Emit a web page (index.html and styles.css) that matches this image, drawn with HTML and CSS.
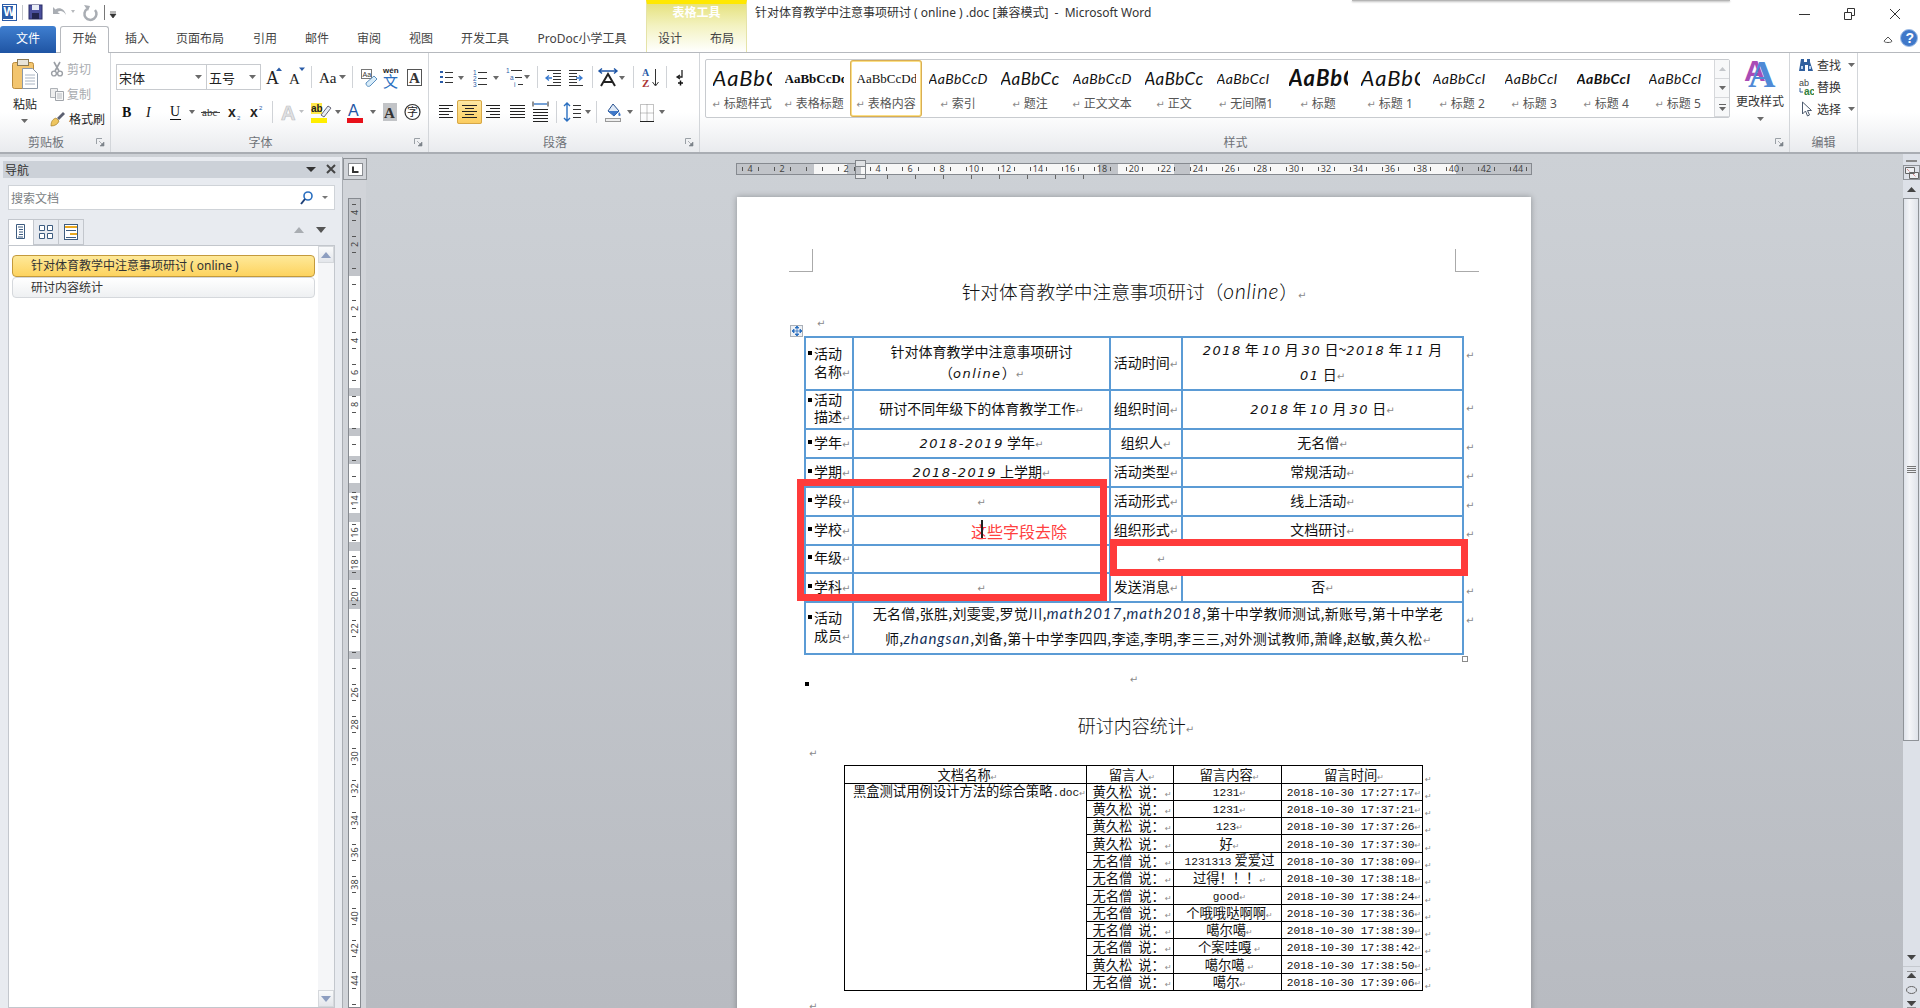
FILE: index.html
```html
<!DOCTYPE html>
<html>
<head>
    <title>针对体育教学中注意事项研讨 ( online ).doc - Microsoft Word</title>
    <link rel="stylesheet" href="styles.css">
</head>
<body>
<svg class="defs" width="0" height="0">
    <symbol id="dd" viewBox="0 0 7 4"><path d="M0 0h7L3.5 4z" fill="#6a6a6a"/></symbol>
    <symbol id="launch" viewBox="0 0 9 9"><path d="M.5 6V.5H6" fill="none" stroke="#9aa0a6"/><path d="M3 3l4 4M8 4v4H4z" fill="#7d838a" stroke="#7d838a" stroke-width=".6"/></symbol>
</svg>
<div class="app">
    <div class="topshadow"></div>
    <div class="tool-band"><span>表格工具</span></div>

    <div class="titlebar">
        <svg class="qat" width="120" height="26">
            <rect x="2.5" y="4.5" width="14" height="16" fill="#fff" stroke="#2b5ca8"/>
            <rect x="3" y="6" width="10" height="13" fill="#2b5ca8"/>
            <text x="3.5" y="16" class="ico-w">W</text>
            <path d="M22.500 5v15" stroke="#c4c7cb"/>
            <rect x="29" y="5" width="13" height="14" fill="#4a4f9c" stroke="#2b2f66"/>
            <rect x="32" y="5" width="7" height="5" fill="#e8ecf5"/>
            <rect x="32" y="13" width="7" height="6" fill="#23264f"/>
            <path d="M53 14V7l2.500 2.500C59 6.500 65 9 66 15c-2-4-6-5-8.500-3l2.500 2z" fill="#a9adb3"/>
            <path d="M71 10h4l-2 3z" fill="#b6b9bd"/>
            <path d="M87 9a6 6 0 1 0 8 1" fill="none" stroke="#a9adb3" stroke-width="2.500"/>
            <path d="M84 5l6 1-2 5z" fill="#a9adb3"/>
            <path d="M104.500 5v15" stroke="#777"/>
            <path d="M110 12h6M110 14h6l-3 4z" fill="#333" stroke="#333" stroke-width=".7"/>
        </svg>
        <div class="doc-title">针对体育教学中注意事项研讨 ( online ) .doc [兼容模式]&nbsp; - &nbsp;Microsoft Word</div>
        <svg class="winbtns" width="112" height="26">
            <path d="M0 14.500h11" stroke="#333"/>
            <path d="M45.500 12.500h7v7h-7zM48.500 12V8.500h7v7H53" fill="none" stroke="#333"/>
            <path d="M91 9l10 10M101 9L91 19" stroke="#333" fill="none"/>
        </svg>
    </div>

    <div class="tabrow">
        <div class="tabs">
            <div class="tab tab-file">文件</div>
            <div class="tab tab-on">开始</div>
            <div class="tab">插入</div>
            <div class="tab">页面布局</div>
            <div class="tab">引用</div>
            <div class="tab">邮件</div>
            <div class="tab">审阅</div>
            <div class="tab">视图</div>
            <div class="tab">开发工具</div>
            <div class="tab">ProDoc小学工具</div>
            <div class="tab">设计</div>
            <div class="tab">布局</div>
        </div>
        <svg class="helpbtns" width="40" height="26">
            <path d="M4 15l4-4 4 4c0 2-8 2-8 0z" fill="#fff" stroke="#555"/>
            <circle cx="29" cy="12" r="8.500" fill="#3f78c9" stroke="#9dbce6"/>
            <text x="25.500" y="17" class="ico-q">?</text>
        </svg>
    </div>

    <div class="ribbon">
        <!-- 剪贴板 -->
        <section class="group g-clip">
            <div class="clip-body">
                <div class="paste">
                    <svg width="28" height="32">
                        <rect x="1.500" y="4.500" width="21" height="26" rx="2" fill="#f3c56e" stroke="#b98b3e"/>
                        <rect x="6.500" y="1.500" width="11" height="6" fill="#e8e4d8" stroke="#8a7a55"/>
                        <path d="M11.500 10.500h10l5 5v15h-15z" fill="#fff" stroke="#8c99a8"/>
                        <path d="M14 17h10M14 20h10M14 23h10M14 26h10" stroke="#a9b4c2"/>
                    </svg>
                    <span class="paste-t">粘贴</span>
                    <svg class="dd" width="7" height="4"><use href="#dd"/></svg>
                </div>
                <div class="clip-list">
                    <div class="clip-item off">
                        <svg width="14" height="16"><path d="M4 1l5 9M10 1L5 10" stroke="#9b9fa5" stroke-width="1.600"/><circle cx="4" cy="12.500" r="2.400" fill="none" stroke="#9b9fa5" stroke-width="1.400"/><circle cx="10" cy="12.500" r="2.400" fill="none" stroke="#9b9fa5" stroke-width="1.400"/></svg>
                        <span>剪切</span>
                    </div>
                    <div class="clip-item off">
                        <svg width="14" height="16"><path d="M.500 2.500h7v9h-7z" fill="#eee" stroke="#aeb2b7"/><path d="M5.500 5.500h8v9h-8z" fill="#f7f7f7" stroke="#a0a4aa"/><path d="M7 8h5M7 10h5M7 12h5" stroke="#b7bbc0"/></svg>
                        <span>复制</span>
                    </div>
                    <div class="clip-item">
                        <svg width="16" height="16"><path d="M1 15c0-5 2-7 5-8l3 3c-1 3-4 5-8 5z" fill="#eec55f" stroke="#a5812c" stroke-width=".7"/><path d="M7 7l6-6 2 2-6 6z" fill="#5a5f70"/></svg>
                        <span>格式刷</span>
                    </div>
                </div>
            </div>
            <div class="g-label">剪贴板<svg class="launch" width="9" height="9"><use href="#launch"/></svg></div>
        </section>

        <!-- 字体 -->
        <section class="group g-font">
            <div class="g-body">
                <div class="tools row-a">
                    <div class="combo c-face">宋体<svg width="7" height="4"><use href="#dd"/></svg></div>
                    <div class="combo c-size">五号<svg width="7" height="4"><use href="#dd"/></svg></div>
                    <svg width="23" height="26"><text x="5" y="20" class="ico-a">A</text><path d="M15 7l3-3.500L21 7z" fill="#2a5ca8"/></svg>
                    <svg width="23" height="26"><text x="5" y="20" class="ico-a2">A</text><path d="M15 3.500h6L18 7z" fill="#2a5ca8"/></svg>
                    <span class="sep"></span>
                    <svg width="33" height="26"><text x="4" y="19" class="ico-aa">Aa</text><path d="M24 11h7l-3.500 4z" fill="#6a6a6a"/></svg>
                    <span class="sep"></span>
                    <svg width="23" height="26"><rect x="5.500" y="5.500" width="10" height="9" fill="#fff" stroke="#777"/><text x="6.500" y="13" class="ico-tiny">Aa</text><path d="M10 19l8-7 3 3-7 7c-2 1-4 0-4-3z" fill="#d8ecf9" stroke="#5b8fc0"/></svg>
                    <svg width="23" height="26"><text x="4" y="9" class="ico-wen">wén</text><text x="4" y="23" class="ico-wenzi">文</text></svg>
                    <svg width="23" height="26"><rect x="5.500" y="5.500" width="14" height="16" fill="#fff" stroke="#555"/><text x="7" y="19" class="ico-serif">A</text></svg>
                </div>
                <div class="tools row-b">
                    <svg width="23" height="24"><text x="6" y="17" class="ico-b">B</text></svg>
                    <svg width="22" height="24"><text x="7" y="17" class="ico-i">I</text></svg>
                    <svg width="36" height="24"><text x="9" y="16" class="ico-u">U</text><path d="M9 19.500h11" stroke="#111"/><path d="M28 10h6l-3 4z" fill="#6a6a6a"/></svg>
                    <svg width="27" height="24"><text x="5" y="16" class="ico-abc">abc</text><path d="M4 12.500h19" stroke="#444"/></svg>
                    <svg width="22" height="24"><text x="4" y="17" class="ico-x">x</text><text x="13" y="20" class="ico-sub">2</text></svg>
                    <svg width="22" height="24"><text x="4" y="17" class="ico-x">x</text><text x="13" y="10" class="ico-sub">2</text></svg>
                    <span class="sep"></span>
                    <svg width="31" height="24"><text x="5" y="20" class="ico-ghost">A</text><path d="M23 10h5l-2.500 3z" fill="#bdbfc2"/></svg>
                    <svg width="35" height="24"><rect x="4" y="3" width="11" height="11" fill="#ffe94a"/><text x="4" y="12" class="ico-ab">ab</text><path d="M14 15l7-9 3 2-7 9z" fill="#e9eef5" stroke="#667"/><rect x="4" y="18" width="16" height="5" fill="#ffee00"/><path d="M28 10h6l-3 4z" fill="#6a6a6a"/></svg>
                    <svg width="36" height="24"><text x="6" y="16" class="ico-ablue">A</text><rect x="5" y="18" width="16" height="5" fill="#e8101a"/><path d="M28 10h6l-3 4z" fill="#6a6a6a"/></svg>
                    <svg width="23" height="24"><rect x="5" y="3" width="14" height="18" fill="#c2c4c7"/><text x="6" y="18" class="ico-serif">A</text></svg>
                    <svg width="23" height="24"><circle cx="11.500" cy="12" r="7.500" fill="#fff" stroke="#333" stroke-width="1.200"/><text x="6" y="16" class="ico-zi">字</text></svg>
                </div>
            </div>
            <div class="g-label">字体<svg class="launch" width="9" height="9"><use href="#launch"/></svg></div>
        </section>

        <!-- 段落 -->
        <section class="group g-para">
            <div class="g-body">
                <div class="tools row-a">
                    <svg width="33" height="26"><path d="M5 8h3M5 13h3M5 18h3" stroke="#2a5ca8" stroke-width="2"/><path d="M10 8.500h8M10 13.500h8M10 18.500h8" stroke="#333"/><path d="M23 12h6l-3 4z" fill="#6a6a6a"/></svg>
                    <svg width="34" height="26"><text x="5" y="11" class="ico-n">1</text><text x="5" y="17" class="ico-n">2</text><text x="5" y="23" class="ico-n">3</text><path d="M10 8.500h9M10 14.500h9M10 20.500h9" stroke="#333"/><path d="M25 12h6l-3 4z" fill="#6a6a6a"/></svg>
                    <svg width="31" height="26"><text x="4" y="9" class="ico-n">1</text><text x="8" y="16" class="ico-n">a</text><text x="12" y="23" class="ico-n">i</text><path d="M9 6.500h11M13 13.500h7M16 20.500h5" stroke="#333"/><path d="M22 11h6l-3 4z" fill="#6a6a6a"/></svg>
                    <span class="sep"></span>
                    <svg width="25" height="26"><path d="M6 6.500h14M12 9.500h8M12 12.500h8M12 15.500h8M12 18.500h8M6 21.500h14" stroke="#333"/><path d="M11 14H6M8 11.500L5 14l3 2.500" stroke="#3a7bd0" fill="none" stroke-width="1.300"/></svg>
                    <svg width="22" height="26"><path d="M3 6.500h14M3 9.500h8M3 12.500h8M3 15.500h8M3 18.500h8M3 21.500h14" stroke="#333"/><path d="M11 14h6M14 11.500l3 2.500-3 2.500" stroke="#3a7bd0" fill="none" stroke-width="1.300" transform="translate(-1)"/></svg>
                    <span class="sep"></span>
                    <svg width="31" height="26"><path d="M5 22L12 10l7 12M8 18h8" fill="none" stroke="#222" stroke-width="2"/><path d="M3 7h18M6 4.500L3 7l3 2.500M18 4.500L21 7l-3 2.500" fill="none" stroke="#1f56a6" stroke-width="1.400"/><path d="M23 12h6l-3 4z" fill="#6a6a6a"/></svg>
                    <span class="sep s12"></span>
                    <svg width="23" height="26"><text x="3" y="12" class="ico-az">A</text><text x="3" y="23" class="ico-zr">Z</text><path d="M16.500 5v16M13.500 18l3 4 3-4" stroke="#333" fill="none"/></svg>
                    <span class="sep"></span>
                    <svg width="24" height="26"><path d="M12 6v7H8M10 11l-3 2 3 2" fill="none" stroke="#222" stroke-width="1.300"/><path d="M8 19h5M10.500 16.500v5" stroke="#111" stroke-width="1.500"/></svg>
                </div>
                <div class="tools row-b">
                    <svg width="22" height="24"><path d="M4 5.500h14M4 8.500h10M4 11.500h14M4 14.500h10M4 17.500h14" stroke="#222"/></svg>
                    <svg class="on" width="25" height="24"><path d="M5 5.500h15M8 8.500h9M5 11.500h15M8 14.500h9M5 17.500h15" stroke="#222"/></svg>
                    <svg width="24" height="24"><path d="M4 5.500h14M8 8.500h10M4 11.500h14M8 14.500h10M4 17.500h14" stroke="#222"/></svg>
                    <svg width="23" height="24"><path d="M4 5.500h15M4 8.500h15M4 11.500h15M4 14.500h15M4 17.500h15" stroke="#222"/></svg>
                    <svg width="23" height="24"><path d="M4 9.500h15M4 12.500h15M4 15.500h15M4 18.500h15M4 21.500h15M4 1.500v5M19 1.500v5" stroke="#222"/><path d="M5 4h13" stroke="#2a6fc0" stroke-width="1.300"/></svg>
                    <span class="sep"></span>
                    <svg width="32" height="24"><path d="M7 3v18M4 6l3-3 3 3M4 18l3 3 3-3" fill="none" stroke="#2a6fc0" stroke-width="1.400"/><path d="M13 5.500h8M13 9.500h8M13 13.500h8M13 17.500h8" stroke="#333"/><path d="M25 10h6l-3 4z" fill="#6a6a6a"/></svg>
                    <span class="sep"></span>
                    <svg width="35" height="24"><path d="M8 11l5-7 6 7-5 5z" fill="#dfe9f6" stroke="#27518f"/><path d="M8 11h11l-5 5z" fill="#3f78c9"/><path d="M19 12c2 2 2 4 .5 4s-1.500-2-.5-4z" fill="#3f78c9"/><rect x="5.500" y="18.500" width="15" height="3" fill="#eee" stroke="#999"/><path d="M27 10h6l-3 4z" fill="#6a6a6a"/></svg>
                    <svg width="33" height="24"><path d="M5.500 4.500h13v17h-13zM5.500 13h13M12 4.500v17" fill="none" stroke="#888" stroke-dasharray="1 1"/><path d="M5 21.500h14" stroke="#222"/><path d="M24 10h6l-3 4z" fill="#6a6a6a"/></svg>
                </div>
            </div>
            <div class="g-label">段落<svg class="launch" width="9" height="9"><use href="#launch"/></svg></div>
        </section>

        <!-- 样式 -->
        <section class="group g-style">
            <div class="style-top">
                <div class="gallery">
                    <div class="sty"><b class="hand big">AaBbC(</b><span><i class="pm">↵</i> 标题样式</span></div>
                    <div class="sty"><b class="ser bold">AaBbCcDd</b><span><i class="pm">↵</i> 表格标题</span></div>
                    <div class="sty sty-on"><b class="ser">AaBbCcDdE</b><span><i class="pm">↵</i> 表格内容</span></div>
                    <div class="sty"><b class="hand">AaBbCcD</b><span><i class="pm">↵</i> 索引</span></div>
                    <div class="sty"><b class="hand mid">AaBbCc</b><span><i class="pm">↵</i> 题注</span></div>
                    <div class="sty"><b class="hand">AaBbCcD</b><span><i class="pm">↵</i> 正文文本</span></div>
                    <div class="sty"><b class="hand mid">AaBbCc</b><span><i class="pm">↵</i> 正文</span></div>
                    <div class="sty"><b class="hand">AaBbCcI</b><span><i class="pm">↵</i> 无间隔1</span></div>
                    <div class="sty"><b class="hand big heavy">AaBbC</b><span><i class="pm">↵</i> 标题</span></div>
                    <div class="sty"><b class="hand big">AaBbC(</b><span><i class="pm">↵</i> 标题 1</span></div>
                    <div class="sty"><b class="hand">AaBbCcI</b><span><i class="pm">↵</i> 标题 2</span></div>
                    <div class="sty"><b class="hand">AaBbCcI</b><span><i class="pm">↵</i> 标题 3</span></div>
                    <div class="sty"><b class="hand heavy">AaBbCcI</b><span><i class="pm">↵</i> 标题 4</span></div>
                    <div class="sty"><b class="hand">AaBbCcI</b><span><i class="pm">↵</i> 标题 5</span></div>
                    <div class="sty-scroll">
                        <span><svg width="7" height="4"><path d="M0 4h7L3.500 0z" fill="#c3c6ca"/></svg></span>
                        <span><svg width="7" height="4"><use href="#dd"/></svg></span>
                        <span><svg width="7" height="7"><path d="M0 .5h7" stroke="#666"/><path d="M0 3h7L3.500 7z" fill="#666"/></svg></span>
                    </div>
                </div>
                <div class="change">
                    <svg width="32" height="30"><text x="0" y="22" class="ico-bigA1">A</text><text x="4" y="28" class="ico-bigA2">A</text></svg>
                    <span>更改样式</span>
                    <svg class="dd" width="7" height="4"><use href="#dd"/></svg>
                </div>
            </div>
            <div class="g-label">样式<svg class="launch" width="9" height="9"><use href="#launch"/></svg></div>
        </section>

        <!-- 编辑 -->
        <section class="group g-edit">
            <div class="edit-list">
                <div class="edit-item">
                    <svg width="16" height="16"><path d="M3 2h3v3h3V2h3v3l3 9h-5V8H7v6H1z" fill="#2f5f9e"/><path d="M3 9h2v3H3zM11 9h2v3h-2z" fill="#b9d3f0"/></svg>
                    <span>查找</span><svg width="7" height="4"><use href="#dd"/></svg>
                </div>
                <div class="edit-item">
                    <svg width="16" height="18"><text x="1" y="8" class="ico-rep">ab</text><text x="6" y="17" class="ico-rep2">ac</text><path d="M2 10v4h3" fill="none" stroke="#2f5f9e"/></svg>
                    <span>替换</span>
                </div>
                <div class="edit-item">
                    <svg width="16" height="16"><path d="M4.500 1v12l3-3 2 5 2-1-2-4.500h4z" fill="#fff" stroke="#4d5b6e"/></svg>
                    <span>选择</span><svg width="7" height="4"><use href="#dd"/></svg>
                </div>
            </div>
            <div class="g-label">编辑</div>
        </section>
    </div>

    <div class="main">
        <!-- 导航窗格 -->
        <aside class="nav">
            <div class="nav-head">
                <span>导航</span>
                <svg width="34" height="17"><path d="M2 6h10L7 11z" fill="#333"/><path d="M23 4l8 8M31 4l-8 8" stroke="#444" stroke-width="2"/></svg>
            </div>
            <div class="nav-search">
                <span>搜索文档</span>
                <svg width="34" height="16"><circle cx="10" cy="6" r="4" fill="#fff" stroke="#2a6fc0" stroke-width="1.600"/><path d="M7 9l-4 5" stroke="#1c3f78" stroke-width="2"/><path d="M24 6h6l-3 3z" fill="#777"/></svg>
            </div>
            <div class="nav-tabs">
                <div class="nav-tab nav-tab-on"><svg width="10" height="16"><path d="M.5.5h8v14h-8z" fill="#fff" stroke="#3d5c80"/><path d="M2 3h5M3 5.500h4M3 8h4M3 10.500h4M2 13h5" stroke="#3d5c80"/></svg></div>
                <div class="nav-tab"><svg width="14" height="16"><path d="M.5 1.500h5v5h-5zM8.500 1.500h5v5h-5zM.5 9.500h5v5h-5zM8.500 9.500h5v5h-5z" fill="#fff" stroke="#3d5c80"/></svg></div>
                <div class="nav-tab"><svg width="14" height="16"><rect x=".5" y=".5" width="13" height="15" fill="#fff" stroke="#3d5c80"/><path d="M1 3h12" stroke="#e9a820" stroke-width="2"/><path d="M2 6.500h10M2 13.500h10" stroke="#3d5c80"/><path d="M6 10h7" stroke="#e9a820" stroke-width="2"/></svg></div>
                <svg class="nav-arrows" width="34" height="8"><path d="M0 7h10L5 1z" fill="#a9adb2"/><path d="M22 1h10l-5 6z" fill="#555"/></svg>
            </div>
            <div class="nav-list">
                <div class="nav-items">
                    <div class="nav-item nav-item-on">针对体育教学中注意事项研讨 ( online )</div>
                    <div class="nav-item">研讨内容统计</div>
                </div>
                <div class="nav-bar">
                    <span class="nav-btn"><svg width="10" height="6"><path d="M0 6h10L5 0z" fill="#8d9ec0"/></svg></span>
                    <span class="nav-btn"><svg width="10" height="6"><path d="M0 0h10L5 6z" fill="#8d9ec0"/></svg></span>
                </div>
            </div>
        </aside>

        <!-- 垂直标尺 -->
        <div class="gutter">
            <div class="corner"><svg width="15" height="13"><rect x=".5" y=".5" width="14" height="12" fill="#fff" stroke="#8a8d92"/><path d="M5 3.500v5.500h5.500" fill="none" stroke="#333" stroke-width="2"/></svg></div>
            <div class="vruler">
                <span><u>4</u></span><span><u>2</u></span><span></span><span><u>2</u></span><span><u>4</u></span><span><u>6</u></span><span><u>8</u></span><span></span><span></span><span><u>14</u></span><span><u>16</u></span><span><u>18</u></span><span><u>20</u></span><span><u>22</u></span><span></span><span><u>26</u></span><span><u>28</u></span><span><u>30</u></span><span><u>32</u></span><span><u>34</u></span><span><u>36</u></span><span><u>38</u></span><span><u>40</u></span><span><u>42</u></span><span><u>44</u></span><span><u>46</u></span>
            </div>
        </div>

        <!-- 文档区 -->
        <div class="workspace">
            <div class="hruler">
                <span>4</span><span>2</span><span></span><span>2</span><span>4</span><span>6</span><span>8</span><span>10</span><span>12</span><span>14</span><span>16</span><span>18</span><span>20</span><span>22</span><span>24</span><span>26</span><span>28</span><span>30</span><span>32</span><span>34</span><span>36</span><span>38</span><span>40</span><span>42</span><span>44</span>
            </div>
            <div class="indent-mark"></div>
            <div class="tab-ticks"></div>

            <div class="page">
                <div class="crop crop-l"></div>
                <div class="crop crop-r"></div>

                <h1 class="doc-h">针对体育教学中注意事项研讨（<em>online</em>）<i class="pm">↵</i></h1>
                <div class="para-line"><i class="pm">↵</i></div>

                <div class="t1-wrap">
                    <div class="move-handle"><svg width="12" height="12"><path d="M6 1v10M1 6h10M6 1L4 3h4zM6 11L4 9h4zM1 6l2-2v4zM11 6L9 4v4z" stroke="#2a6fc0" fill="#2a6fc0" stroke-width=".8"/></svg></div>
                    <table class="t1">
                        <colgroup><col class="c1"><col class="c2"><col class="c3"><col class="c4"><col class="c5"></colgroup>
                        <tr class="r53">
                            <td class="k"><div class="kw"><s></s><p>活动<br>名称<i class="pm">↵</i></p></div></td>
                            <td class="lh"><div class="up lh21">针对体育教学中注意事项研讨<br>（<em class="hw">online</em>）<i class="pm">↵</i></div></td>
                            <td>活动时间<i class="pm">↵</i></td>
                            <td class="lh"><div class="up lh25"><em class="hw">2018</em> 年 <em class="hw">10</em> 月 <em class="hw">30</em> 日~<em class="hw">2018</em> 年 <em class="hw">11</em> 月<br><em class="hw">01</em> 日<i class="pm">↵</i></div></td>
                            <td class="eor"><i class="pm">↵</i></td>
                        </tr>
                        <tr class="r39">
                            <td class="k"><div class="kw"><s></s><p class="tight">活动<br>描述<i class="pm">↵</i></p></div></td>
                            <td>研讨不同年级下的体育教学工作<i class="pm">↵</i></td>
                            <td>组织时间<i class="pm">↵</i></td>
                            <td><em class="hw">2018</em> 年 <em class="hw">10</em> 月 <em class="hw">30</em> 日<i class="pm">↵</i></td>
                            <td class="eor"><i class="pm">↵</i></td>
                        </tr>
                        <tr class="r29">
                            <td class="k"><div class="kw"><s></s><p>学年<i class="pm">↵</i></p></div></td>
                            <td><em class="hw">2018-2019</em> 学年<i class="pm">↵</i></td>
                            <td>组织人<i class="pm">↵</i></td>
                            <td>无名僧<i class="pm">↵</i></td>
                            <td class="eor"><i class="pm">↵</i></td>
                        </tr>
                        <tr class="r29">
                            <td class="k"><div class="kw"><s></s><p>学期<i class="pm">↵</i></p></div></td>
                            <td><em class="hw">2018-2019</em> 上学期<i class="pm">↵</i></td>
                            <td>活动类型<i class="pm">↵</i></td>
                            <td>常规活动<i class="pm">↵</i></td>
                            <td class="eor"><i class="pm">↵</i></td>
                        </tr>
                        <tr class="r29">
                            <td class="k"><div class="kw"><s></s><p>学段<i class="pm">↵</i></p></div></td>
                            <td><i class="pm">↵</i></td>
                            <td>活动形式<i class="pm">↵</i></td>
                            <td>线上活动<i class="pm">↵</i></td>
                            <td class="eor"><i class="pm">↵</i></td>
                        </tr>
                        <tr class="r29">
                            <td class="k"><div class="kw"><s></s><p>学校<i class="pm">↵</i></p></div></td>
                            <td></td>
                            <td>组织形式<i class="pm">↵</i></td>
                            <td>文档研讨<i class="pm">↵</i></td>
                            <td class="eor"><i class="pm">↵</i></td>
                        </tr>
                        <tr class="r28">
                            <td class="k"><div class="kw"><s></s><p>年级<i class="pm">↵</i></p></div></td>
                            <td></td>
                            <td colspan="2" class="mark-l"><i class="pm">↵</i></td>
                            <td class="eor"></td>
                        </tr>
                        <tr class="r29">
                            <td class="k"><div class="kw"><s></s><p>学科<i class="pm">↵</i></p></div></td>
                            <td><i class="pm">↵</i></td>
                            <td>发送消息<i class="pm">↵</i></td>
                            <td>否<i class="pm">↵</i></td>
                            <td class="eor"><i class="pm">↵</i></td>
                        </tr>
                        <tr class="r52">
                            <td class="k"><div class="kw"><s></s><p>活动<br>成员<i class="pm">↵</i></p></div></td>
                            <td colspan="3" class="lh"><div class="up lh25 members">无名僧,张胜,刘雯雯,罗觉川,<em class="hw hw-s">math2017</em>,<em class="hw hw-s">math2018</em>,第十中学教师测试,新账号,第十中学老<br>师,<em class="hw hw-s">zhangsan</em>,刘备,第十中学李四四,李逵,李明,李三三,对外测试教师,萧峰,赵敏,黄久松<i class="pm">↵</i></div></td>
                            <td class="eor"><i class="pm">↵</i></td>
                        </tr>
                    </table>
                    <div class="size-handle"></div>

                    <!-- 批注框 -->
                    <div class="anno anno-a"></div>
                    <div class="anno anno-b"></div>
                    <div class="anno-text">这些字段去除</div>
                    <div class="ibeam"></div>
                </div>

                <div class="after-t1"><s></s><i class="pm">↵</i></div>
                <h2 class="doc-h2">研讨内容统计<i class="pm">↵</i></h2>
                <div class="para-line2"><i class="pm">↵</i></div>

                <table class="t2">
                    <colgroup><col class="d1"><col class="d2"><col class="d3"><col class="d4"><col class="d5"></colgroup>
                    <tr class="h18"><td>文档名称<i class="pm">↵</i></td><td>留言人<i class="pm">↵</i></td><td>留言内容<i class="pm">↵</i></td><td>留言时间<i class="pm">↵</i></td><td class="eor"><i class="pm">↵</i></td></tr>
                    <tr class="h17"><td rowspan="12" class="docname">黑盒测试用例设计方法的综合策略<span class="mono">.doc</span><i class="pm">↵</i></td><td>黄久松&nbsp; 说：<i class="pm">↵</i></td><td><span class="mono">1231</span><i class="pm">↵</i></td><td><span class="mono">2018-10-30 17:27:17</span><i class="pm">↵</i></td><td class="eor"><i class="pm">↵</i></td></tr>
                    <tr class="h17"><td>黄久松&nbsp; 说：<i class="pm">↵</i></td><td><span class="mono">1231</span><i class="pm">↵</i></td><td><span class="mono">2018-10-30 17:37:21</span><i class="pm">↵</i></td><td class="eor"><i class="pm">↵</i></td></tr>
                    <tr class="h17"><td>黄久松&nbsp; 说：<i class="pm">↵</i></td><td><span class="mono">123</span><i class="pm">↵</i></td><td><span class="mono">2018-10-30 17:37:26</span><i class="pm">↵</i></td><td class="eor"><i class="pm">↵</i></td></tr>
                    <tr class="h18"><td>黄久松&nbsp; 说：<i class="pm">↵</i></td><td>好<i class="pm">↵</i></td><td><span class="mono">2018-10-30 17:37:30</span><i class="pm">↵</i></td><td class="eor"><i class="pm">↵</i></td></tr>
                    <tr class="h17"><td>无名僧&nbsp; 说：<i class="pm">↵</i></td><td><span class="mono">1231313</span> 爱爱过</td><td><span class="mono">2018-10-30 17:38:09</span><i class="pm">↵</i></td><td class="eor"><i class="pm">↵</i></td></tr>
                    <tr class="h17"><td>无名僧&nbsp; 说：<i class="pm">↵</i></td><td>过得！！！<i class="pm">↵</i></td><td><span class="mono">2018-10-30 17:38:18</span><i class="pm">↵</i></td><td class="eor"><i class="pm">↵</i></td></tr>
                    <tr class="h18"><td>无名僧&nbsp; 说：<i class="pm">↵</i></td><td><span class="mono">good</span><i class="pm">↵</i></td><td><span class="mono">2018-10-30 17:38:24</span><i class="pm">↵</i></td><td class="eor"><i class="pm">↵</i></td></tr>
                    <tr class="h17"><td>无名僧&nbsp; 说：<i class="pm">↵</i></td><td>个哦哦哒啊啊<i class="pm">↵</i></td><td><span class="mono">2018-10-30 17:38:36</span><i class="pm">↵</i></td><td class="eor"><i class="pm">↵</i></td></tr>
                    <tr class="h17"><td>无名僧&nbsp; 说：<i class="pm">↵</i></td><td>噶尔噶<i class="pm">↵</i></td><td><span class="mono">2018-10-30 17:38:39</span><i class="pm">↵</i></td><td class="eor"><i class="pm">↵</i></td></tr>
                    <tr class="h17"><td>无名僧&nbsp; 说：<i class="pm">↵</i></td><td>个案哇嘎&nbsp;<i class="pm">↵</i></td><td><span class="mono">2018-10-30 17:38:42</span><i class="pm">↵</i></td><td class="eor"><i class="pm">↵</i></td></tr>
                    <tr class="h18"><td>黄久松&nbsp; 说：<i class="pm">↵</i></td><td>噶尔噶&nbsp;<i class="pm">↵</i></td><td><span class="mono">2018-10-30 17:38:50</span><i class="pm">↵</i></td><td class="eor"><i class="pm">↵</i></td></tr>
                    <tr class="h16"><td>无名僧&nbsp; 说：<i class="pm">↵</i></td><td>噶尔<i class="pm">↵</i></td><td><span class="mono">2018-10-30 17:39:06</span><i class="pm">↵</i></td><td class="eor"><i class="pm">↵</i></td></tr>
                </table>
                <div class="para-line3"><i class="pm">↵</i></div>
            </div>
        </div>

        <!-- 右侧滚动条 -->
        <div class="vscroll">
            <div class="split"></div>
            <div class="rulerbtn"><svg width="14" height="12"><path d="M.5.5h9v6h-9zM4.500 5.500h9v6h-9z" fill="#eef0f3" stroke="#666"/><path d="M2 2l3 3M8 7l3 3" stroke="#c55" stroke-dasharray="1 1"/></svg></div>
            <div class="sb-btn"><svg width="9" height="5"><path d="M0 5h9L4.500 0z" fill="#444"/></svg></div>
            <div class="sb-track">
                <div class="sb-thumb"><svg width="9" height="7"><path d="M0 .5h9M0 2.500h9M0 4.500h9M0 6.500h9" stroke="#777"/></svg></div>
            </div>
            <div class="sb-btn"><svg width="9" height="5"><path d="M0 0h9L4.500 5z" fill="#444"/></svg></div>
            <div class="sb-browse">
                <svg width="9" height="7"><path d="M0 .5h9M0 7l4.500-5L9 7z" fill="#444" stroke="#444" stroke-width=".5"/></svg>
                <svg width="11" height="8"><ellipse cx="5.500" cy="4" rx="5" ry="3.500" fill="none" stroke="#666"/></svg>
                <svg width="9" height="7"><path d="M0 0l4.500 5L9 0zM0 6.500h9" fill="#444" stroke="#444" stroke-width=".5"/></svg>
            </div>
        </div>
    </div>
</div>
</body>
</html>
```

FILE: styles.css
```css
html, body {
    margin: 0;
    height: 100%;
    overflow: hidden;
    background: #fff;
}
body {
    font-family: "Noto Sans", "Noto Sans CJK SC", sans-serif;
    font-size: 12px;
    color: #333;
}
.defs { position: absolute; }
.app {
    position: relative;
    width: 1920px;
    height: 1008px;
    display: flex;
    flex-direction: column;
    overflow: hidden;
}
.app svg { display: block; flex: none; }
p { margin: 0; }

/* title bar */
.topshadow {
    position: absolute;
    left: 1352px;
    top: 0;
    width: 378px;
    height: 1px;
    background: #b5b5b5;
    box-shadow: 0 1px 2px rgba(0,0,0,0.35);
}
.tool-band {
    position: absolute;
    left: 646px;
    top: 0;
    width: 101px;
    height: 52px;
    box-sizing: border-box;
    border-top: 4px solid #ffe800;
    border-left: 1px solid #e5e3a8;
    border-right: 1px solid #e5e3a8;
    background: linear-gradient(#e6e27f, #f3f2c0 45%, #fff);
    color: #fff;
    font-weight: bold;
    text-align: center;
    line-height: 18px;
}
.titlebar {
    position: relative;
    height: 26px;
    display: flex;
    align-items: center;
}
.doc-title {
    position: absolute;
    left: 755px;
    top: 3px;
    font-size: 12px;
    line-height: 20px;
    color: #333;
    white-space: nowrap;
}
.qat { flex: none; }
.winbtns { margin-left: auto; margin-right: 9px; }

/* tabs */
.tabrow {
    position: relative;
    height: 27px;
    display: flex;
    justify-content: space-between;
    border-bottom: 1px solid #b6b9be;
    box-sizing: border-box;
}
.tabs {
    display: grid;
    grid-template-columns: 60px 49px 56px 70px 60px 44px 60px 44px 84px 110px 66px 38px;
}
.tab {
    text-align: center;
    line-height: 25px;
    color: #444;
}
.tab-file {
    width: 56px;
    height: 27px;
    background: linear-gradient(#3f7fd0, #1f54a3);
    border-radius: 3px 3px 0 0;
    color: #fff;
    box-sizing: border-box;
}
.tab-on {
    height: 27px;
    background: #fff;
    border: 1px solid #b6b9be;
    border-bottom: none;
    border-radius: 3px 3px 0 0;
    box-sizing: border-box;
    line-height: 23px;
}
.helpbtns { margin-right: 0; }

/* ribbon */
.ribbon {
    height: 101px;
    flex: none;
    box-sizing: border-box;
    display: flex;
    background: linear-gradient(#fff 60%, #e9ebee);
    border-bottom: 2px solid #a9adb3;
}
.group {
    display: flex;
    flex-direction: column;
    box-sizing: border-box;
    border-right: 1px solid #d3d6da;
}
.g-clip { width: 111px; }
.g-font { width: 318px; }
.g-para { width: 271px; }
.g-style { width: 1090px; }
.g-edit { width: 68px; }
.g-body { flex: 1; min-height: 0; padding-top: 11px; }
.g-label {
    position: relative;
    flex: none;
    height: 20px;
    box-sizing: border-box;
    padding-right: 18px;
    line-height: 21px;
    text-align: center;
    color: #6e7278;
}
.g-edit .g-label { padding-right: 0; }
.launch { position: absolute; right: 5px; top: 6px; }

.clip-body { flex: 1; min-height: 0; display: flex; }
.paste {
    width: 50px;
    display: flex;
    flex-direction: column;
    align-items: center;
    box-sizing: border-box;
    padding-top: 5px;
}
.paste svg { margin-right: 1px; }
.paste-t { margin-top: 6px; line-height: 18px; color: #222; }
.paste .dd { margin-top: 5px; }
.clip-list { padding-top: 3px; }
.clip-item {
    height: 25px;
    display: flex;
    align-items: center;
    gap: 3px;
    color: #222;
}
.clip-item.off { color: #a8abaf; }

.tools { display: flex; align-items: center; }
.row-a { height: 26px; }
.row-b { height: 24px; margin-top: 10px; }
.g-font .tools { padding-left: 5px; }
.g-para .tools { padding-left: 6px; }
.sep { width: 8px; height: 22px; flex: none; background: linear-gradient(#d0d3d7, #d0d3d7) center / 1px 100% no-repeat; }
.s12 { width: 12px; }
.combo {
    height: 26px;
    box-sizing: border-box;
    border: 1px solid #c8cbcf;
    background: #fff;
    display: flex;
    align-items: center;
    justify-content: space-between;
    padding: 0 4px 0 2px;
    font-size: 13px;
    color: #222;
}
.c-face { width: 91px; }
.c-size { width: 54px; border-left: none; }
.on {
    background: linear-gradient(#fde9a5, #fbcb5c);
    outline: 1px solid #d6a748;
    outline-offset: -1px;
    border-radius: 2px;
}

/* icon lettering */
.ico-w { font: bold 12px "Liberation Sans", sans-serif; fill: #fff; }
.ico-q { font: bold 14px "Liberation Sans", sans-serif; fill: #fff; }
.ico-a { font: 18px "Liberation Serif", serif; fill: #222; }
.ico-a2 { font: 15px "Liberation Serif", serif; fill: #222; }
.ico-aa { font: 15px "Liberation Serif", serif; fill: #222; }
.ico-tiny { font: 7px "Liberation Sans", sans-serif; fill: #333; }
.ico-wen { font: bold 8px "Liberation Sans", sans-serif; fill: #222; }
.ico-wenzi { font: 15px "Noto Sans CJK SC", sans-serif; fill: #2a6fc0; }
.ico-serif { font: bold 15px "Liberation Serif", serif; fill: #333; }
.ico-b { font: bold 14px "Liberation Serif", serif; fill: #111; }
.ico-i { font: italic 14px "Liberation Serif", serif; fill: #111; }
.ico-u { font: 14px "Liberation Serif", serif; fill: #111; }
.ico-abc { font: 11px "Liberation Serif", serif; fill: #333; }
.ico-x { font: bold 14px "Liberation Sans", sans-serif; fill: #222; }
.ico-sub { font: 6px "Liberation Sans", sans-serif; fill: #2a5ca8; }
.ico-ghost { font: bold 20px "Liberation Sans", sans-serif; fill: #e2e3e5; stroke: #bfc1c4; stroke-width: .7px; }
.ico-ab { font: bold 10px "Liberation Sans", sans-serif; fill: #222; }
.ico-ablue { font: 16px "Liberation Sans", sans-serif; fill: #1f56a6; }
.ico-zi { font: 11px "Noto Sans CJK SC", sans-serif; fill: #222; }
.ico-n { font: 6.500px "Liberation Sans", sans-serif; fill: #2a5ca8; }
.ico-az { font: bold 10px "Liberation Serif", serif; fill: #2a5ca8; }
.ico-zr { font: bold 11px "Liberation Serif", serif; fill: #a33; }
.ico-bigA1 { font: bold 30px "Liberation Sans", sans-serif; fill: #a94cb5; }
.ico-bigA2 { font: bold 38px "Liberation Serif", serif; fill: #4f8ad6; }
.ico-rep { font: 9px "Liberation Sans", sans-serif; fill: #444; }
.ico-rep2 { font: bold 10px "Liberation Sans", sans-serif; fill: #2f7f3a; }

/* style gallery */
.style-top { flex: 1; min-height: 0; display: flex; padding: 6px 0 0 5px; }
.gallery {
    height: 59px;
    width: 1025px;
    box-sizing: border-box;
    border: 1px solid #c8cbcf;
    background: #fff;
    display: flex;
    position: relative;
    border-radius: 2px;
}
.sty {
    width: 72px;
    flex: none;
    box-sizing: border-box;
    padding: 0 6px;
    text-align: center;
    display: flex;
    flex-direction: column;
    align-items: center;
    overflow: hidden;
    white-space: nowrap;
}
.sty b {
    display: block;
    height: 32px;
    width: 59px;
    overflow: hidden;
    line-height: 38px;
    font-weight: normal;
    font-size: 14px;
    color: #111;
    text-align: left;
}
.sty span { color: #555; line-height: 16px; margin-top: 4px; }
.sty .hand { font-family: "Lato", sans-serif; font-style: italic; letter-spacing: 0.5px; }
.sty .big { font-size: 22px; letter-spacing: 1px; line-height: 36px; }
.sty .mid { font-size: 17px; }
.sty .heavy { font-weight: bold; }
.sty .ser { font-family: "Liberation Serif", serif; font-size: 13px; }
.sty .bold { font-weight: bold; }
.sty-on {
    height: 57px;
    margin: 0;
    border: 2px solid #fbdf85;
    outline: 1px solid #d9ae54;
    outline-offset: -1px;
    border-radius: 3px;
    padding: 0 4px;
}
.sty-on b { height: 30px; line-height: 34px; }
.sty-scroll {
    position: absolute;
    right: 0;
    top: 0;
    bottom: 0;
    width: 14px;
    border-left: 1px solid #d6d8db;
    display: flex;
    flex-direction: column;
    background: #f7f8f9;
}
.sty-scroll span {
    flex: 1;
    margin: 0;
    display: flex;
    align-items: center;
    justify-content: center;
    border-bottom: 1px solid #d6d8db;
}
.change {
    width: 56px;
    display: flex;
    flex-direction: column;
    align-items: center;
    color: #333;
    margin-left: 2px;
}
.change span { margin-top: 4px; line-height: 18px; white-space: nowrap; }
.change .dd { margin-top: 6px; }

.edit-list { flex: 1; min-height: 0; padding: 0 0 0 8px; }
.edit-item {
    height: 22px;
    display: flex;
    align-items: center;
    gap: 3px;
    color: #333;
}
.edit-item span { margin-right: 4px; }
.edit-list .edit-item:first-child { margin-top: 1px; }

/* main */
.main {
    flex: 1;
    min-height: 0;
    display: flex;
    background: linear-gradient(#cdd1d6, #b8bbc1);
}
.nav {
    width: 343px;
    flex: none;
    box-sizing: border-box;
    margin-top: 3px;
    background: #e8ebf0;
    border-right: 1px solid #a9adb3;
    padding: 4px 2px 0 3px;
    display: flex;
    flex-direction: column;
}
.nav-head {
    height: 17px;
    flex: none;
    background: #ccd1d8;
    display: flex;
    align-items: center;
    justify-content: space-between;
    padding: 0 2px;
    color: #333;
}
.nav-search {
    flex: none;
    height: 25px;
    box-sizing: border-box;
    margin: 7px 5px 0 5px;
    background: #fff;
    border: 1px solid #cfd3d8;
    display: flex;
    align-items: center;
    justify-content: space-between;
    padding: 0 2px;
    color: #7c7f84;
}
.nav-tabs {
    flex: none;
    height: 26px;
    margin: 9px 5px 0 5px;
    display: flex;
    position: relative;
    z-index: 1;
}
.nav-tab {
    width: 26px;
    height: 26px;
    box-sizing: border-box;
    border: 1px solid #c3c7cd;
    margin-right: -1px;
    display: flex;
    align-items: center;
    justify-content: center;
    background: #e8ebf0;
}
.nav-tab-on { background: #fff; border-bottom-color: #fff; }
.nav-arrows { margin: 7px 7px 0 auto; }
.nav-list {
    flex: 1;
    min-height: 0;
    margin: 0 5px;
    background: #fff;
    border: 1px solid #c3c7cd;
    display: flex;
}
.nav-items { flex: 1; padding: 9px 3px 0 3px; }
.nav-item {
    height: 21px;
    box-sizing: border-box;
    padding-left: 18px;
    border: 1px solid #d5d8dc;
    border-radius: 4px;
    background: linear-gradient(#fff, #eef0f2);
    line-height: 19px;
    white-space: nowrap;
}
.nav-item-on {
    height: 22px;
    background: linear-gradient(#fee999, #fdd35f);
    border-color: #c39a3c;
    line-height: 20px;
}
.nav-bar {
    width: 16px;
    flex: none;
    display: flex;
    flex-direction: column;
    justify-content: space-between;
    background: #f5f6f8;
}
.nav-btn {
    height: 17px;
    box-sizing: border-box;
    border: 1px solid #d5d8dc;
    background: linear-gradient(#f9fafb, #e3e6eb);
    display: flex;
    align-items: center;
    justify-content: center;
}

/* rulers */
.gutter { width: 23px; flex: none; position: relative; background: #d1d4d9; }
.corner {
    box-sizing: border-box;
    width: 24px;
    height: 22px;
    margin-top: 4px;
    border: 1px solid #8f9398;
    display: flex;
    align-items: center;
    justify-content: center;
}
.vruler {
    position: absolute;
    left: 5px;
    top: 44px;
    width: 13px;
    height: 810px;
    box-sizing: border-box;
    border: 1px solid #868a90;
    overflow: hidden;
    background: linear-gradient(#c1c4c9 0 77px, #fff 77px 189px, #c1c4c9 189px 197px, #fff 197px 229px, #c1c4c9 229px 237px, #fff 237px 257px, #c1c4c9 257px 265px, #fff 265px 284px, #c1c4c9 284px 294px, #fff 294px 314px, #c1c4c9 314px 323px, #fff 323px 343px, #c1c4c9 343px 352px, #fff 352px 371px, #c1c4c9 371px 381px, #fff 381px 401px, #c1c4c9 401px 410px, #fff 410px 452px, #c1c4c9 452px 460px, #fff 460px);
}
.vruler span {
    display: flex;
    align-items: center;
    justify-content: center;
    height: 32px;
    font-size: 9px;
    line-height: 9px;
    color: #444;
    background:
        linear-gradient(#555, #555) 3px 8px / 4px 1px no-repeat,
        linear-gradient(#555, #555) 3px 24px / 4px 1px no-repeat;
}
.vruler span:first-child { margin-top: -3px; }
.vruler u { text-decoration: none; transform: rotate(-90deg); white-space: nowrap; }

.workspace {
    flex: 1;
    min-width: 0;
    position: relative;
    padding-top: 9px;
    overflow: hidden;
}
.hruler {
    margin-left: 370px;
    width: 796px;
    height: 12px;
    box-sizing: border-box;
    border: 1px solid #868a90;
    display: flex;
    overflow: hidden;
    background: linear-gradient(90deg, #c1c4c9 0 77px, #f7f7f7 77px 110px, #c1c4c9 110px 124px, #f7f7f7 124px 362px, #c1c4c9 362px 381px, #f7f7f7 381px 437px, #c1c4c9 437px 453px, #f7f7f7 453px 719px, #c1c4c9 719px);
}
.hruler span {
    width: 32px;
    flex: none;
    height: 10px;
    text-align: center;
    font-size: 9px;
    line-height: 10px;
    color: #444;
    background:
        linear-gradient(#555, #555) 8px 3px / 1px 4px no-repeat,
        linear-gradient(#555, #555) 24px 3px / 1px 4px no-repeat;
}
.hruler span:first-child { margin-left: -3px; }
.indent-mark {
    position: absolute;
    left: 489px;
    top: 6px;
    width: 11px;
    height: 19px;
    box-sizing: border-box;
    border: 1px solid #808489;
    background: linear-gradient(#dfe1e4 0 5px, #808489 5px 6px, transparent 6px 13px, #808489 13px 14px, #e8e9eb 14px);
}
.tab-ticks {
    position: absolute;
    left: 521px;
    top: 21px;
    width: 197px;
    height: 4px;
    background: repeating-linear-gradient(90deg, #666 0 1px, transparent 1px 28px);
}

/* page */
.page {
    position: relative;
    margin: 22px 0 0 371px;
    width: 794px;
    height: 900px;
    background: #fff;
    box-shadow: 0 0 6px rgba(0,0,0,0.3);
    box-sizing: border-box;
    padding-top: 81px;
    font-family: "Noto Sans CJK SC", sans-serif;
    color: #111;
}
.crop { position: absolute; top: 52px; width: 24px; height: 23px; box-sizing: border-box; border-bottom: 1px solid #aaa; }
.crop-l { left: 52px; border-right: 1px solid #aaa; }
.crop-r { left: 718px; border-left: 1px solid #aaa; }
.pm {
    font: normal 10px "DejaVu Sans", sans-serif;
    color: #8a8a8a;
    letter-spacing: 0;
}
.doc-h {
    margin: 0;
    height: 26px;
    text-align: center;
    font-size: 18.700px;
    font-weight: 300;
    line-height: 26px;
    color: #111;
}
.doc-h em { font-family: "Lato", sans-serif; font-size: 21px; letter-spacing: 0.8px; color: #000; }
.para-line { height: 32px; box-sizing: border-box; padding: 11px 0 0 80px; line-height: 14px; }

.t1-wrap { position: relative; margin-left: 67px; width: 674px; }
.move-handle {
    position: absolute;
    left: -14px;
    top: -11px;
    width: 13px;
    height: 12px;
    box-sizing: border-box;
    border: 1px solid #aab0b8;
    background: #eef1f5;
    display: flex;
    align-items: center;
    justify-content: center;
}
.t1 {
    border-collapse: collapse;
    table-layout: fixed;
    width: 672px;
    font-size: 14px;
    line-height: 20px;
}
.c1 { width: 48px; }
.c2 { width: 257px; }
.c3 { width: 72px; }
.c4 { width: 281px; }
.c5 { width: 14px; }
.t1 td {
    border: 2px solid #5b9bd5;
    padding: 0 0 4px;
    text-align: center;
    vertical-align: middle;
    white-space: nowrap;
}
.t1 td.eor {
    border: none;
    padding: 6px 0 0 2px;
    text-align: left;
    vertical-align: top;
}
.t1 td.k { text-align: left; padding: 0 0 0 1px; }
.t1 td.lh { padding: 0; }
.up { margin: -2px 0 2px; }
.lh21 { line-height: 21px; }
.lh25 { line-height: 25px; }
.members { letter-spacing: 0.3px; }
.kw { display: flex; align-items: flex-start; margin: -2px 0 2px; }
.kw s { flex: none; width: 4px; height: 4px; background: #000; margin: 7px 2px 0 1px; }
.kw p { line-height: 18px; }
.kw p.tight { line-height: 17px; }
.r53 { height: 53px; }
.r39 { height: 39px; }
.r29 { height: 29px; }
.r28 { height: 28px; }
.r52 { height: 52px; }
.t1 td.mark-l { text-align: left; padding-left: 46px; }
.hw {
    font-family: "DejaVu Sans", sans-serif;
    font-style: italic;
    font-size: 13px;
    letter-spacing: 1.500px;
    line-height: 1;
}
.hw-s { font-family: "Lato", sans-serif; font-size: 15px; color: #12305a; letter-spacing: 1px; }
.size-handle {
    position: absolute;
    left: 658px;
    top: 320px;
    width: 6px;
    height: 6px;
    box-sizing: border-box;
    border: 1px solid #8a8a8a;
    background: #fff;
}
.anno { position: absolute; box-sizing: border-box; border: 7px solid #ff3b3b; }
.anno-a { left: -7px; top: 143px; width: 310px; height: 122px; }
.anno-b { left: 306px; top: 203px; width: 358px; height: 37px; }
.anno-text {
    position: absolute;
    left: 167px;
    top: 184px;
    font-size: 16px;
    line-height: 22px;
    color: #ff4040;
    white-space: nowrap;
}
.ibeam {
    position: absolute;
    left: 177px;
    top: 184px;
    width: 2px;
    height: 18px;
    background: #222;
}

.after-t1 { position: relative; height: 57px; text-align: center; padding: 16px 0 0 0; box-sizing: border-box; line-height: 14px; }
.after-t1 s { position: absolute; left: 68px; top: 27px; width: 4px; height: 4px; background: #000; }
.doc-h2 {
    margin: 0;
    height: 26px;
    padding-left: 4px;
    text-align: center;
    font-size: 18px;
    font-weight: 300;
    line-height: 26px;
    color: #111;
}
.para-line2 { height: 27px; box-sizing: border-box; padding: 7px 0 0 72px; line-height: 14px; }
.para-line3 { height: 20px; padding: 7px 0 0 72px; line-height: 14px; }

.t2 {
    margin-left: 107px;
    border-collapse: collapse;
    table-layout: fixed;
    width: 592px;
    font-size: 13.300px;
    line-height: 14px;
}
.d1 { width: 242px; }
.d2 { width: 87px; }
.d3 { width: 108px; }
.d4 { width: 141px; }
.d5 { width: 14px; }
.t2 td {
    border: 1px solid #000;
    padding: 0 0 0 4px;
    text-align: center;
    white-space: nowrap;
    overflow: hidden;
}
.t2 .pm { font-size: 8px; }
.t2 td.eor {
    border: none;
    padding: 0 0 0 2px;
    text-align: left;
    vertical-align: bottom;
    line-height: 8px;
}
.t2 td.docname { vertical-align: top; text-align: right; padding: 0; }
.mono { font-family: "Liberation Mono", monospace; font-size: 11.200px; }
.h16 { height: 16px; }
.h17 { height: 17px; }
.h18 { height: 18px; }

/* right scrollbar */
.vscroll {
    width: 17px;
    flex: none;
    display: flex;
    flex-direction: column;
    align-items: stretch;
    background: #dde1e8;
    box-sizing: border-box;
    padding-top: 6px;
}
.split { height: 2px; margin: 0 3px 3px; flex: none; background: #888; }
.rulerbtn {
    height: 15px;
    flex: none;
    box-sizing: border-box;
    border: 1px solid #8f9398;
    display: flex;
    align-items: center;
    justify-content: center;
}
.sb-btn { height: 18px; display: flex; align-items: center; justify-content: center; flex: none; }
.sb-track { flex: 1; min-height: 0; }
.sb-thumb {
    height: 543px;
    box-sizing: border-box;
    margin-right: 1px;
    border: 1px solid #8f9398;
    background: linear-gradient(90deg, #dfe3ea, #f4f5f8 40%, #dfe3ea);
    display: flex;
    align-items: center;
    justify-content: center;
}
.sb-browse {
    height: 42px;
    flex: none;
    border-top: 1px solid #c5c9cf;
    display: flex;
    flex-direction: column;
    align-items: center;
    justify-content: space-between;
    padding: 4px 0 0;
    box-sizing: border-box;
}
```
